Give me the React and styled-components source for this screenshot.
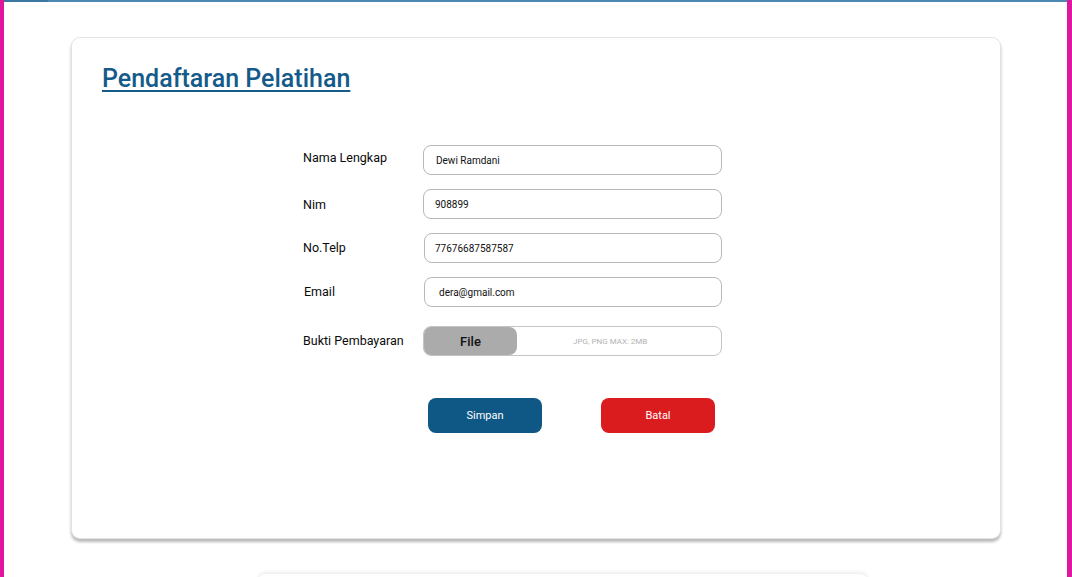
import React from 'react'
import styled, { createGlobalStyle } from 'styled-components'

const GlobalStyle = createGlobalStyle`
    body {
        margin: 0;
        font-family: Roboto, "Liberation Sans", sans-serif;
        background: #ffffff;
    }
`

const fields = [
    { label: 'Nama Lengkap', value: 'Dewi Ramdani', labelShift: -3, textIndent: 12 },
    { label: 'Nim', value: '908899', labelShift: 0, textIndent: 11 },
    { label: 'No.Telp', value: '77676687587587', labelShift: -1, textIndent: 10, inputShift: 1 },
    { label: 'Email', value: 'dera@gmail.com', labelShift: -1, textIndent: 14, inputShift: 1, labelIndent: 1 },
]

function App() {
    return (
        <>
            <GlobalStyle />
            <Frame>
                <TopBar />
                <Card>
                    <Title>Pendaftaran Pelatihan</Title>
                    <Form>
                        {fields.map((f) => (
                            <Row key={f.label}>
                                <Label $shift={f.labelShift} $indent={f.labelIndent}>{f.label}</Label>
                                <Input $indent={f.textIndent} $shift={f.inputShift}>{f.value}</Input>
                            </Row>
                        ))}
                        <Row $gapTop={5}>
                            <Label $shift={-1}>Bukti Pembayaran</Label>
                            <FileBox>
                                <FileButton>File</FileButton>
                                <FileHint>JPG, PNG MAX: 2MB</FileHint>
                            </FileBox>
                        </Row>
                        <Buttons>
                            <Button $color="#0f5886">Simpan</Button>
                            <Button $color="#da1c1f">Batal</Button>
                        </Buttons>
                    </Form>
                </Card>
                <NextCard />
            </Frame>
        </>
    )
}

export default App

const Frame = styled.div`
    display: flex;
    flex-direction: column;
    height: 577px;
    box-sizing: border-box;
    border-left: 4px solid #e0169f;
    border-right: 5px solid #e0169f;
    overflow: hidden;
`
const TopBar = styled.div`
    height: 2px;
    flex-shrink: 0;
    background: linear-gradient(to right, #3b77a1 0px, #3b77a1 44px, #4d88b1 44px);
`
const Card = styled.div`
    flex-shrink: 0;
    width: 930px;
    height: 502px;
    box-sizing: border-box;
    margin: 35px 0 0 67px;
    padding: 26px 0 0 30px;
    background: #ffffff;
    border: 1px solid #e4e4e4;
    border-radius: 9px;
    box-shadow: 0 3px 3px rgba(0, 0, 0, 0.28);
`
const Title = styled.h1`
    margin: 0;
    font-size: 25px;
    line-height: 30px;
    font-weight: 500;
    color: #155b8a;
    text-decoration: underline;
    text-decoration-thickness: 2px;
    text-underline-offset: 3px;
    display: inline-block;
`
const Form = styled.div`
    display: flex;
    flex-direction: column;
    gap: 14px;
    margin: 51px 0 0 201px;
`
const Row = styled.div`
    display: grid;
    grid-template-columns: 120px 299px;
    align-items: center;
    margin-top: ${(p) => p.$gapTop || 0}px;
`
const Label = styled.div`
    font-size: 12.5px;
    color: #0a0a0a;
    padding-left: ${(p) => p.$indent || 0}px;
    transform: translateY(${(p) => p.$shift || 0}px);
`
const Input = styled.div`
    height: 30px;
    box-sizing: border-box;
    display: flex;
    align-items: center;
    padding-left: ${(p) => p.$indent}px;
    margin-left: ${(p) => p.$shift || 0}px;
    border: 1px solid #b8b8b8;
    border-radius: 8px;
    font-size: 10px;
    color: #111111;
    background: #ffffff;
`
const FileBox = styled.div`
    height: 30px;
    box-sizing: border-box;
    display: flex;
    align-items: stretch;
    border: 1px solid #c4c4c4;
    border-radius: 8px;
    overflow: hidden;
`
const FileButton = styled.div`
    width: 93px;
    display: flex;
    align-items: center;
    justify-content: center;
    background: #ababab;
    border-radius: 0 8px 8px 0;
    font-size: 13px;
    font-weight: 500;
    color: #111111;
`
const FileHint = styled.div`
    display: flex;
    align-items: center;
    padding-left: 56px;
    font-size: 8px;
    color: #b3b3b3;
`
const Buttons = styled.div`
    display: flex;
    gap: 59px;
    margin: 28px 0 0 125px;
`
const Button = styled.button`
    width: 114px;
    height: 35px;
    border: none;
    border-radius: 8px;
    background: ${(p) => p.$color};
    color: #ffffff;
    font-family: Roboto, "Liberation Sans", sans-serif;
    font-size: 11px;
    cursor: pointer;
`
const NextCard = styled.div`
    flex-shrink: 0;
    width: 610px;
    height: 40px;
    margin: 35px 0 0 254px;
    background: #ffffff;
    border-radius: 8px;
    box-shadow: 0 -1px 4px rgba(0, 0, 0, 0.1);
`
